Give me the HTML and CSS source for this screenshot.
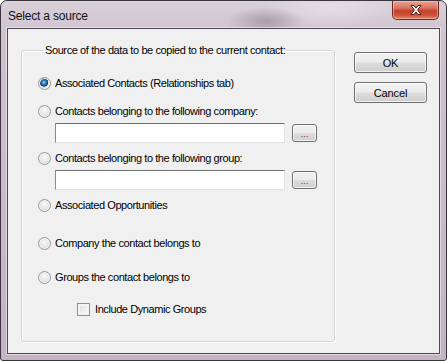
FILE: index.html
```html
<!DOCTYPE html>
<html lang="en">
<head>
    <meta charset="UTF-8">
    <meta name="viewport" content="width=device-width, initial-scale=1.0">
    <title>Select a source</title>
    <link rel="stylesheet" href="styles.css">
</head>
<body>
    <div class="window">
        <div class="titlebar">
            <span class="title">Select a source</span>
            <div class="close-btn">
                <svg width="18" height="12" viewBox="0 0 18 12">
                    <path d="M4 1.5h3l2 2.6 2-2.6h3l-3.4 4.5 3.4 4.5h-3l-2-2.6-2 2.6h-3l3.4-4.5z" fill="#fff" stroke="#5a1b12" stroke-width="1"/>
                </svg>
            </div>
        </div>

        <div class="client">
            <fieldset class="groupbox">
                <legend>Source of the data to be copied to the current contact:</legend>

                <label class="option first">
                    <input type="radio" name="source" checked>
                    <span>Associated Contacts (Relationships tab)</span>
                </label>

                <label class="option">
                    <input type="radio" name="source">
                    <span>Contacts belonging to the following company:</span>
                </label>
                <div class="picker">
                    <input type="text" class="textbox">
                    <button class="btn dots">...</button>
                </div>

                <label class="option near">
                    <input type="radio" name="source">
                    <span>Contacts belonging to the following group:</span>
                </label>
                <div class="picker">
                    <input type="text" class="textbox">
                    <button class="btn dots">...</button>
                </div>

                <label class="option near">
                    <input type="radio" name="source">
                    <span>Associated Opportunities</span>
                </label>

                <label class="option wide">
                    <input type="radio" name="source">
                    <span>Company the contact belongs to</span>
                </label>

                <label class="option spaced">
                    <input type="radio" name="source">
                    <span>Groups the contact belongs to</span>
                </label>

                <label class="option check">
                    <input type="checkbox">
                    <span>Include Dynamic Groups</span>
                </label>
            </fieldset>

            <div class="actions">
                <button class="btn action">OK</button>
                <button class="btn action">Cancel</button>
            </div>
        </div>
    </div>
</body>
</html>
```

FILE: styles.css
```css
html, body {
    margin: 0;
    height: 100%;
}
body {
    font-family: "Liberation Sans", Arial, sans-serif;
    font-size: 11px;
    color: #000;
    background: #fff;
}
.window {
    box-sizing: border-box;
    width: 447px;
    height: 361px;
    display: flex;
    flex-direction: column;
    border: 1px solid #3b3540;
    border-radius: 7px 7px 3px 3px;
    background:
        radial-gradient(ellipse 40px 14px at 265px 20px, rgba(120, 105, 115, 0.45), transparent),
        radial-gradient(ellipse 70px 20px at 330px 8px, rgba(255, 255, 255, 0.35), transparent),
        linear-gradient(to bottom, #d9d0d8 0%, #cfc2cf 10%, #c4b2c6 100%);
    padding: 0 6px 6px 6px;
}
.titlebar {
    height: 27px;
    display: flex;
    align-items: flex-start;
    justify-content: space-between;
}
.title {
    font-size: 12px;
    margin-top: 8px;
    margin-left: 1px;
    color: #111;
    letter-spacing: -0.2px;
}
.close-btn {
    width: 45px;
    height: 18px;
    margin-right: 1px;
    border: 1px solid #6b2b22;
    border-top: none;
    border-radius: 0 0 5px 5px;
    background: linear-gradient(to bottom, #e9a595 0%, #d9715c 40%, #c2402a 55%, #d0553c 80%, #e08a6c 100%);
    box-shadow: inset 0 0 0 1px rgba(255, 210, 200, 0.5);
    display: flex;
    align-items: center;
    justify-content: center;
}
.client {
    flex: 1;
    display: flex;
    align-items: flex-start;
    background: #f0f0f0;
    border: 1px solid #4e4a52;
    box-shadow: 0 0 0 1px rgba(255, 255, 255, 0.45);
}
.groupbox {
    box-sizing: border-box;
    width: 314px;
    height: 299px;
    margin: 14px 0 0 13px;
    padding: 0 0 0 16px;
    border: 1px solid #d5d5d5;
    border-radius: 3px;
    box-shadow: inset 1px 1px 0 #fff, 1px 1px 0 #fff;
}
.groupbox legend {
    margin-left: 5px;
    padding: 0 2px;
    line-height: 14px;
    letter-spacing: -0.4px;
}
.option {
    display: flex;
    align-items: center;
    gap: 4px;
    height: 16px;
    margin-top: 12px;
    letter-spacing: -0.42px;
}
.option.first {
    margin-top: 18px;
}
.option.near {
    margin-top: 7px;
}
.option.wide {
    margin-top: 22px;
}
.option.spaced {
    margin-top: 18px;
}
.option.check {
    margin-top: 16px;
    margin-left: 39px;
    gap: 5px;
}
.option input {
    appearance: none;
    margin: 0;
    width: 13px;
    height: 13px;
    flex: none;
}
.option input[type="radio"] {
    border-radius: 50%;
    border: 1px solid #979797;
    background: radial-gradient(circle at 50% 40%, #fafafa 0%, #e4e4e4 55%, #cfcfcf 100%);
    box-shadow: inset 0 0 0 1px #f4f4f4;
}
.option input[type="radio"]:checked {
    background:
        radial-gradient(circle at 45% 40%, #a9d4f2 0, #2f7dbb 2px, #173f70 4px, transparent 4.5px),
        radial-gradient(circle at 50% 40%, #fafafa 0%, #e4e4e4 55%, #cfcfcf 100%);
}
.option input[type="checkbox"] {
    width: 13px;
    height: 13px;
    border: 1px solid #8e8f8f;
    background: linear-gradient(135deg, #d8d8d8 0%, #f0f0f0 60%, #fbfbfb 100%);
    box-shadow: inset 0 0 0 2px #f4f4f4;
}
.picker {
    display: flex;
    align-items: center;
    gap: 7px;
    margin-top: 4px;
    margin-left: 17px;
}
.textbox {
    box-sizing: border-box;
    width: 230px;
    height: 20px;
    margin: 0;
    padding: 0;
    background: #fff;
    border: 1px solid #e3e3e3;
    border-top-color: #6f6f6f;
    border-left-color: #8a8a8a;
    outline: none;
}
.btn {
    box-sizing: border-box;
    margin: 0;
    padding: 0;
    font-family: inherit;
    font-size: 11px;
    color: #000;
    border: 1px solid #707070;
    border-radius: 3px;
    background: linear-gradient(to bottom, #f2f2f2 0%, #ebebeb 48%, #dddddd 52%, #cfcfcf 100%);
    box-shadow: inset 0 0 0 1px rgba(255, 255, 255, 0.7);
    cursor: pointer;
}
.dots {
    width: 25px;
    height: 18px;
    font-size: 9px;
    line-height: 12px;
    padding-top: 2px;
    color: #5a2a6a;
}
.actions {
    display: flex;
    flex-direction: column;
    gap: 9px;
    margin: 23px 0 0 19px;
}
.action {
    width: 73px;
    height: 21px;
    letter-spacing: -0.1px;
}
```
